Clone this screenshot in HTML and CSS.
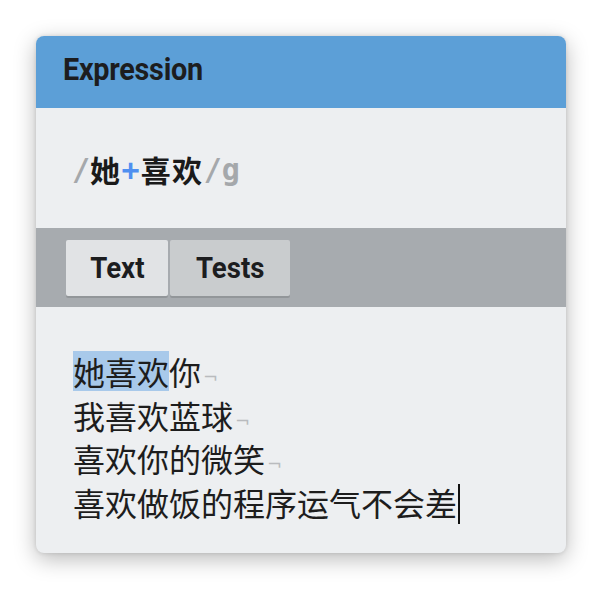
FILE: index.html
```html
<!DOCTYPE html>
<html lang="zh">
<head>
<meta charset="utf-8">
<link rel="stylesheet" href="styles.css">
</head>
<body>
<div class="card">
  <div class="header"><span class="title">Expression</span></div>
  <div class="expr"><span class="delim">/</span><span class="lit">她</span><span class="quant">+</span><span class="lit">喜欢</span><span class="delim">/g</span></div>
  <div class="tabbar">
    <div class="tab active"><span class="tablabel">Text</span></div>
    <div class="tab"><span class="tablabel">Tests</span></div>
  </div>
  <div class="textarea">
    <div class="line"><span class="match">她喜欢</span>你<span class="eol">¬</span></div>
    <div class="line">我喜欢蓝球<span class="eol">¬</span></div>
    <div class="line">喜欢你的微笑<span class="eol">¬</span></div>
    <div class="line">喜欢做饭的程序运气不会差<span class="caret"></span></div>
  </div>
</div>
</body>
</html>
```
FILE: styles.css
```css
html, body {
  margin: 0;
  padding: 0;
  background: #ffffff;
}
body {
  width: 602px;
  height: 590px;
  overflow: hidden;
}
.card {
  margin: 36px 0 0 36px;
  width: 530px;
  height: 517px;
  background: #edeff1;
  border-radius: 8px;
  overflow: hidden;
  box-shadow: 0 6px 22px rgba(0, 0, 0, 0.28), 0 0 4px rgba(0, 0, 0, 0.12);
  display: flex;
  flex-direction: column;
}
.header {
  height: 72px;
  background: #5c9fd7;
  color: #1c1d1f;
  font-family: Roboto, "Liberation Sans", sans-serif;
  font-weight: 700;
  font-size: 31px;
  line-height: 68px;
  padding-left: 27px;
  box-sizing: border-box;
}
.title {
  display: inline-block;
  transform: scaleX(0.93);
  transform-origin: left center;
  letter-spacing: -0.3px;
}
.expr {
  height: 120px;
  box-sizing: border-box;
  padding-left: 36px;
  display: flex;
  align-items: center;
  font-family: "DejaVu Sans Mono", "Noto Sans CJK SC", monospace;
  font-size: 30px;
  font-weight: 700;
  color: #1a1a1a;
  padding-top: 2px;
}
.expr .delim {
  color: #a5a8ab;
}
.expr .lit {
  font-family: "Noto Sans CJK SC", sans-serif;
  font-weight: 700;
  font-size: 30px;
  letter-spacing: 1.5px;
}
.expr .quant {
  color: #4f8ff0;
  margin-right: 1px;
}
.tabbar {
  height: 79px;
  background: #a7abaf;
  box-sizing: border-box;
  padding: 12px 0 0 30px;
  display: flex;
  gap: 2px;
  align-items: flex-start;
}
.tab {
  height: 56px;
  box-sizing: border-box;
  font-family: Roboto, "Liberation Sans", sans-serif;
  font-weight: 700;
  font-size: 30px;
  color: #1c1d1f;
  display: flex;
  align-items: center;
  justify-content: center;
  background: #c9ccce;
  border-radius: 2px;
  box-shadow: 0 2px 0 rgba(0, 0, 0, 0.12);
  width: 120px;
}
.tablabel {
  display: inline-block;
  transform: scaleX(0.92);
  margin-top: -2px;
}
.tab.active {
  background: #e1e3e5;
  width: 102px;
}
.textarea {
  flex: 1;
  padding: 43px 0 0 37px;
  font-family: "Noto Sans CJK SC", sans-serif;
  font-size: 32px;
  color: #1d1d1d;
}
.line {
  height: 43.5px;
  line-height: 43.5px;
  white-space: nowrap;
}
.match {
  display: inline-block;
  background: #a8c9ea;
  line-height: 40px;
  height: 40px;
  vertical-align: top;
  margin-top: 1px;
}
.eol {
  font-family: "DejaVu Sans", sans-serif;
  font-size: 18px;
  color: #b9bbbe;
  margin-left: 2px;
  vertical-align: 2px;
}
.caret {
  display: inline-block;
  width: 2px;
  height: 40px;
  background: #111;
  vertical-align: middle;
  margin-left: 1px;
  position: relative;
  top: -3px;
}
```
